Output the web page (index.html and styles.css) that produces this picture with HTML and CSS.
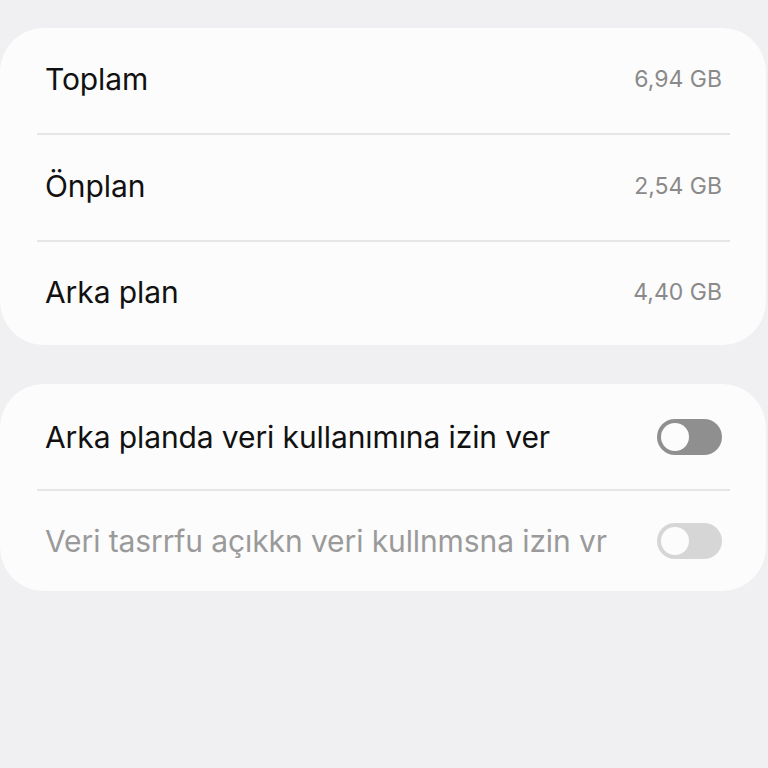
FILE: index.html
```html
<!DOCTYPE html>
<html lang="tr">
<head>
<meta charset="utf-8">
<link rel="stylesheet" href="styles.css">
</head>
<body>
<div class="page">
  <div class="card">
    <div class="row">
      <span class="label">Toplam</span>
      <span class="value">6,94 GB</span>
    </div>
    <div class="divider"></div>
    <div class="row">
      <span class="label">Önplan</span>
      <span class="value">2,54 GB</span>
    </div>
    <div class="divider"></div>
    <div class="row row-last">
      <span class="label">Arka plan</span>
      <span class="value">4,40 GB</span>
    </div>
  </div>
  <div class="card">
    <div class="row row-toggle">
      <span class="label">Arka planda veri kullanımına izin ver</span>
      <span class="switch"><span class="knob"></span></span>
    </div>
    <div class="divider"></div>
    <div class="row row-toggle row-last disabled">
      <span class="label">Veri tasrrfu açıkkn veri kullnmsna izin vr</span>
      <span class="switch"><span class="knob"></span></span>
    </div>
  </div>
</div>
</body>
</html>
```
FILE: styles.css
```css
html, body {
  margin: 0;
  padding: 0;
  background: #f0f0f2;
  width: 768px;
  height: 768px;
  overflow: hidden;
}
.page {
  padding: 28px 2px 0 0;
  display: flex;
  flex-direction: column;
  gap: 39px;
  font-family: "Inter", "Noto Sans", sans-serif;
}
.card {
  background: #fcfcfc;
  border-radius: 44px;
  display: flex;
  flex-direction: column;
}
.row {
  height: 105px;
  display: flex;
  align-items: center;
  justify-content: space-between;
  padding: 0 44px 4px 45px;
  box-sizing: border-box;
}
.row.row-last {
  height: 103px;
}
.row-toggle {
  padding-bottom: 0;
}
.row-toggle.row-last {
  height: 100px;
}
.label {
  font-size: 30px;
  color: #111;
  letter-spacing: -0.1px;
}
.value {
  font-size: 23px;
  color: #8a8a8a;
}
.divider {
  height: 2px;
  background: #e6e6e6;
  margin: 0 36px 0 37px;
}
.switch {
  width: 65px;
  height: 36px;
  border-radius: 18px;
  background: #8f8f8f;
  display: flex;
  align-items: center;
  padding-left: 4px;
  box-sizing: border-box;
}
.knob {
  width: 28px;
  height: 28px;
  border-radius: 50%;
  background: #fcfcfc;
}
.disabled .label {
  color: #9a9a9a;
}
.disabled .switch {
  background: #d6d6d6;
}
```
